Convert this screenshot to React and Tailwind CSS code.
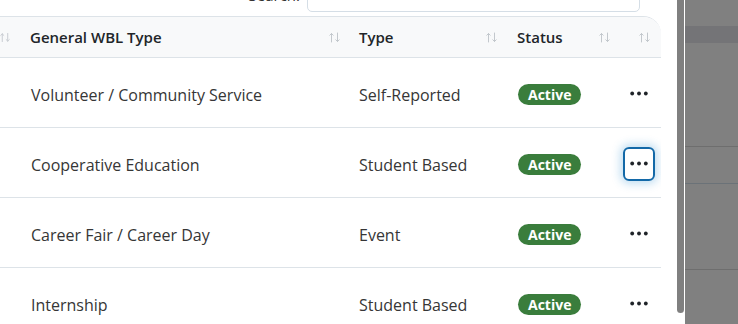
import React from "react";

const rows = [
    { name: "Volunteer / Community Service", type: "Self-Reported", status: "Active" },
    { name: "Cooperative Education", type: "Student Based", status: "Active", focused: true },
    { name: "Career Fair / Career Day", type: "Event", status: "Active" },
    { name: "Internship", type: "Student Based", status: "Active" },
];

const grid = "grid grid-cols-[16px_329px_158px_114px_44px]";

const SortIcon = () => (
    <svg width="11" height="11" viewBox="0 0 11 11" fill="none" stroke="#c3c8cd" strokeWidth="1" strokeLinecap="round">
        <path d="M2.5 10V1.5M0.8 3.2L2.5 1.5L4.2 3.2" />
        <path d="M8.5 1V9.5M6.8 7.8L8.5 9.5L10.2 7.8" />
    </svg>
);

const Dots = () => (
    <svg width="18" height="5" viewBox="0 0 18 5" fill="#1f2328">
        <circle cx="2.2" cy="2.5" r="1.9" />
        <circle cx="9" cy="2.5" r="1.9" />
        <circle cx="15.8" cy="2.5" r="1.9" />
    </svg>
);

const HeaderCell = ({ label, pr = "pr-[5px]" }) => (
    <div className={`flex items-center justify-between pl-[14px] ${pr}`}>
        <span className="pt-[1px]">{label}</span>
        <SortIcon />
    </div>
);

const App = () => {
    return (
        <div className="flex w-[738px] h-[324px] overflow-hidden bg-white" style={{ fontFamily: "'Open Sans', 'Liberation Sans', sans-serif" }}>
            <div className="relative w-[684px] h-full bg-white flex">
                <div className="w-[661px] flex flex-col">
                    {/* search row, scrolled partially out of view */}
                    <div className="flex items-center justify-end h-[30px] -mt-[18px] pr-[21px] gap-[7px]">
                        <span className="text-[15px] text-[#333] -mt-[3px]">Search:</span>
                        <div className="w-[333px] h-[30px] border border-[#d5dee6] rounded-[5px]" />
                    </div>
                    <div className="mt-[4px] border-t border-[#dde3e8] rounded-tr-[18px] overflow-hidden">
                        <div className={`${grid} h-[41px] bg-[#f8f9fa] border-b border-[#dde3e8] text-[15px] font-semibold text-[#212529]`}>
                            <div className="flex items-center justify-end pr-[6px]">
                                <SortIcon />
                            </div>
                            <HeaderCell label="General WBL Type" />
                            <HeaderCell label="Type" pr="pr-[6px]" />
                            <HeaderCell label="Status" pr="pr-[7px]" />
                            <div className="flex items-center justify-end pr-[11px]">
                                <SortIcon />
                            </div>
                        </div>
                        {rows.map((row, index) => (
                            <div key={index} className={`${grid} h-[70px] border-b border-[#dde3e8] text-[16px] text-[#363636]`}>
                                <div />
                                <div className="flex items-center pl-[15px] pt-[4px]">{row.name}</div>
                                <div className="flex items-center pl-[14px] pt-[4px]">{row.type}</div>
                                <div className="flex items-center pl-[15px] pt-[4px]">
                                    <span className="bg-[#3a7d3c] text-white text-[14px] font-bold leading-none px-[10px] h-[21px] flex items-center rounded-full">
                                        {row.status}
                                    </span>
                                </div>
                                <div className="flex items-center justify-center pt-[2px]">
                                    {row.focused ? (
                                        <button className="w-[32px] h-[34px] flex items-center justify-center border-2 border-[#1369a8] rounded-[6px] shadow-[0_0_9px_3px_rgba(40,140,210,0.28)]">
                                            <Dots />
                                        </button>
                                    ) : (
                                        <Dots />
                                    )}
                                </div>
                            </div>
                        ))}
                    </div>
                </div>
                <div className="flex-1" />
                <div className="w-[7px] h-[313px] bg-[#808080] rounded-b-[4px]" />
            </div>
            <div className="w-px bg-white" />
            <div className="flex-1 bg-[#808080] flex flex-col">
                <div className="h-[26px]" />
                <div className="h-[17px] bg-[#747477]" />
                <div className="h-[103px]" />
                <div className="h-px bg-[#6e6e6e]" />
                <div className="h-[36px]" />
                <div className="h-px bg-[#6b7278]" />
                <div className="h-[85px]" />
                <div className="h-px bg-[#6e6e6e]" />
            </div>
        </div>
    );
};

export default App;
